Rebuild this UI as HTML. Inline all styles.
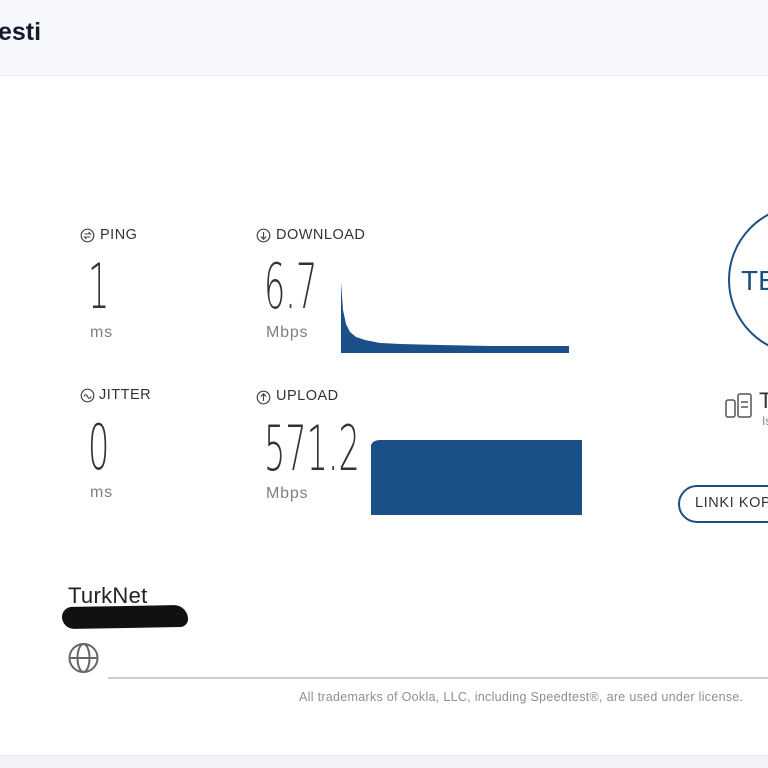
<!DOCTYPE html>
<html><head><meta charset="utf-8"><style>
*{margin:0;padding:0;box-sizing:border-box}
html{width:768px;height:768px;overflow:hidden}
body{width:768px;height:768px;overflow:hidden;background:#fff;font-family:"Liberation Sans",sans-serif;position:relative;color:#2b2b2b}
.abs{position:absolute;white-space:nowrap}
.hdr{left:0;top:0;width:768px;height:76px;background:#f7f8fb;border-bottom:1px solid #eceef2}
.lbl{font-size:14.5px;color:#333;letter-spacing:.5px}
.num{font-family:"DejaVu Sans ExtraLight","DejaVu Sans",sans-serif;font-weight:200;font-size:62px;color:#333;transform:scaleX(.54);transform-origin:left top;line-height:64px}
.unit{font-size:16px;color:#808080;letter-spacing:.8px}
</style></head><body>
<div class="abs hdr"></div>
<div class="abs" style="left:-2px;top:18px;font-size:25px;font-weight:bold;color:#151a2e">esti</div>

<svg class="abs" style="left:80px;top:228px" width="15" height="15" viewBox="0 0 15 15"><circle cx="7.5" cy="7.5" r="6.3" fill="none" stroke="#444" stroke-width="1.2"/><path d="M4.5 6h6l-2-2M10.5 9h-6l2 2" fill="none" stroke="#444" stroke-width="1.1"/></svg>
<div class="abs lbl" style="left:100px;top:227px">PING</div>
<div class="abs num" style="left:88px;top:255px">1</div>
<div class="abs unit" style="left:90px;top:324px">ms</div>

<svg class="abs" style="left:256px;top:228px" width="15" height="15" viewBox="0 0 15 15"><circle cx="7.5" cy="7.5" r="6.3" fill="none" stroke="#444" stroke-width="1.2"/><path d="M7.5 4v7M4.8 8.5l2.7 2.7 2.7-2.7" fill="none" stroke="#444" stroke-width="1.2"/></svg>
<div class="abs lbl" style="left:276px;top:227px">DOWNLOAD</div>
<div class="abs num" style="left:264px;top:255px">6.7</div>
<div class="abs unit" style="left:266px;top:324px">Mbps</div>
<svg class="abs" style="left:340px;top:280px" width="230" height="75" viewBox="0 0 230 75"><path d="M1 73V2L3 30 6 44 10 52 16 57 25 60 40 63 60 64 100 65 150 66 229 66V73Z" fill="#1a4f87"/></svg>

<svg class="abs" style="left:80px;top:388px" width="15" height="15" viewBox="0 0 15 15"><circle cx="7.5" cy="7.5" r="6.3" fill="none" stroke="#444" stroke-width="1.2"/><path d="M4 8.5c1-2.5 2.5-2.5 3.5 0s2.5 2.5 3.5 0" fill="none" stroke="#444" stroke-width="1.1"/></svg>
<div class="abs lbl" style="left:99px;top:387px">JITTER</div>
<div class="abs num" style="left:88px;top:416px">0</div>
<div class="abs unit" style="left:90px;top:484px">ms</div>

<svg class="abs" style="left:256px;top:390px" width="15" height="15" viewBox="0 0 15 15"><circle cx="7.5" cy="7.5" r="6.3" fill="none" stroke="#444" stroke-width="1.2"/><path d="M7.5 11V4M4.8 6.5l2.7-2.7 2.7 2.7" fill="none" stroke="#444" stroke-width="1.2"/></svg>
<div class="abs lbl" style="left:276px;top:388px">UPLOAD</div>
<div class="abs num" style="left:264px;top:417px">571.2</div>
<div class="abs unit" style="left:266px;top:485px">Mbps</div>
<div class="abs" style="left:371px;top:440px;width:211px;height:75px;background:#1a4f87;border-top-left-radius:9px 6px"></div>

<div class="abs" style="left:728px;top:205px;width:150px;height:150px;border:2.5px solid #1d4f82;border-radius:50%"></div>
<div class="abs" style="left:741px;top:265px;font-size:28px;color:#1d4f82">TE</div>
<svg class="abs" style="left:724px;top:392px" width="30" height="28" viewBox="0 0 30 28"><rect x="2" y="8" width="9" height="17" rx="2" fill="none" stroke="#555" stroke-width="1.5"/><rect x="14" y="2" width="13" height="23" rx="2" fill="none" stroke="#555" stroke-width="1.5"/><path d="M17 10h7M17 15h7" stroke="#555" stroke-width="1.5"/></svg>
<div class="abs" style="left:759px;top:388px;font-size:22px;color:#333">T</div>
<div class="abs" style="left:762px;top:414px;font-size:12px;color:#888">Is</div>
<div class="abs" style="left:678px;top:485px;width:160px;height:38px;border:2px solid #1d4f82;border-radius:19px"></div>
<div class="abs" style="left:695px;top:495px;font-size:14.5px;color:#333;letter-spacing:.6px">LINKI KOPYALA</div>

<div class="abs" style="left:68px;top:583px;font-size:22px;color:#222;letter-spacing:.3px">TurkNet</div>
<div class="abs" style="left:62px;top:606px;width:126px;height:22px;background:#111;border-radius:10px 14px 8px 12px;transform:rotate(-1deg)"></div>
<svg class="abs" style="left:67px;top:642px" width="33" height="32" viewBox="0 0 33 32"><circle cx="16.5" cy="16" r="14" fill="none" stroke="#666" stroke-width="2"/><ellipse cx="16.5" cy="16" rx="6" ry="14" fill="none" stroke="#666" stroke-width="2"/><path d="M2.5 16h28" stroke="#666" stroke-width="2"/></svg>
<div class="abs" style="left:108px;top:677px;width:660px;height:2px;background:#cfcfcf"></div>
<div class="abs" style="left:299px;top:690px;font-size:12.5px;color:#8a8f96;letter-spacing:.3px">All trademarks of Ookla, LLC, including Speedtest®, are used under license.</div>
<div class="abs" style="left:0;top:755px;width:768px;height:13px;background:#f1f3f7;border-top:1px solid #e6e8ec"></div>
</body></html>
